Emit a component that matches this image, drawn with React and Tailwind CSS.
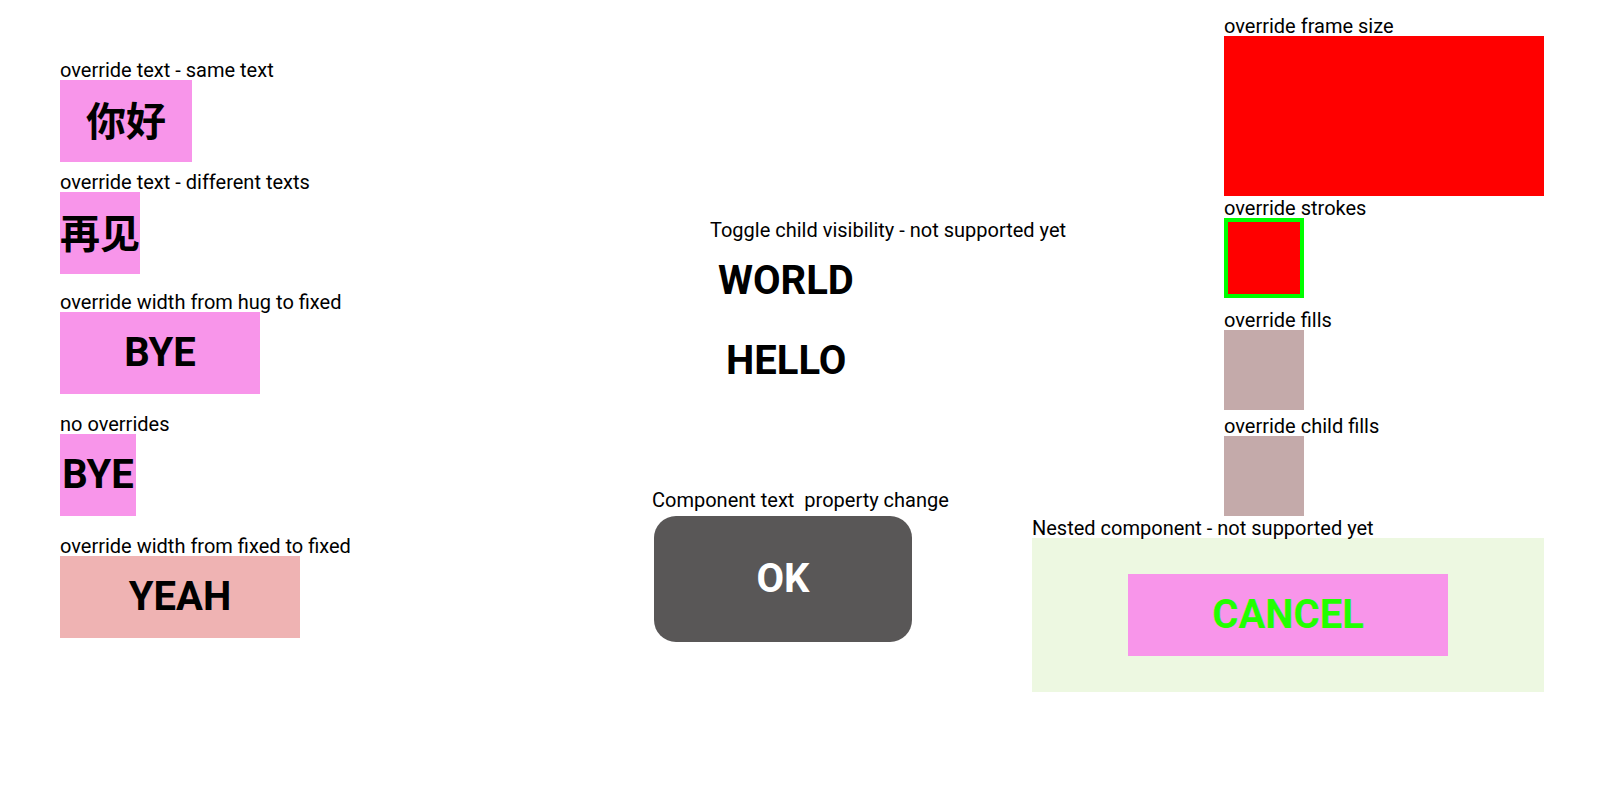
import React from 'react';

const label = 'block h-[21px] leading-[23px] text-[20px] text-black whitespace-pre';
const bold = 'font-bold text-[40px] leading-none';
const cjk = 'font-bold text-[40px] leading-none pt-[4px]';

export default function App() {
    return (
        <div
            className="relative w-[1604px] h-[796px] bg-white overflow-hidden text-black"
            style={{ fontFamily: 'Roboto, "Noto Sans CJK SC", sans-serif' }}
        >
            {/* left column */}
            <div className="absolute left-[60px] top-[59px]">
                <span className={label}>override text - same text</span>
                <div className="w-[132px] h-[82px] bg-[#f895ea] flex items-center justify-center">
                    <span className={cjk}>你好</span>
                </div>
            </div>

            <div className="absolute left-[60px] top-[171px]">
                <span className={label}>override text - different texts</span>
                <div className="w-[80px] h-[82px] bg-[#f895ea] flex items-center justify-center">
                    <span className={cjk}>再见</span>
                </div>
            </div>

            <div className="absolute left-[60px] top-[291px]">
                <span className={label}>override width from hug to fixed</span>
                <div className="w-[200px] h-[82px] bg-[#f895ea] flex items-center justify-center">
                    <span className={bold}>BYE</span>
                </div>
            </div>

            <div className="absolute left-[60px] top-[413px]">
                <span className={label}>no overrides</span>
                <div className="w-[76px] h-[82px] bg-[#f895ea] flex items-center justify-center">
                    <span className={bold}>BYE</span>
                </div>
            </div>

            <div className="absolute left-[60px] top-[535px]">
                <span className={label}>override width from fixed to fixed</span>
                <div className="w-[240px] h-[82px] bg-[#efb3b3] flex items-center justify-center">
                    <span className={bold}>YEAH</span>
                </div>
            </div>

            {/* middle column */}
            <div className="absolute left-[710px] top-[219px] flex flex-col">
                <span className={label}>Toggle child visibility - not supported yet</span>
                <div className="ml-[8px] mt-[18px] font-bold text-[40px] leading-[46px]">WORLD</div>
                <div className="ml-[16px] mt-[34px] font-bold text-[40px] leading-[46px]">HELLO</div>
            </div>

            <div className="absolute left-[652px] top-[489px]">
                <span className={label}>Component text  property change</span>
                <div className="ml-[2px] mt-[6px] w-[258px] h-[126px] rounded-[22px] bg-[#595757] flex items-center justify-center">
                    <span className="font-bold text-[40px] leading-none text-white">OK</span>
                </div>
            </div>

            {/* right column */}
            <div className="absolute left-[1224px] top-[15px]">
                <span className={label}>override frame size</span>
                <div className="w-[320px] h-[160px] bg-[#ff0000]" />
            </div>

            <div className="absolute left-[1224px] top-[197px]">
                <span className={label}>override strokes</span>
                <div className="w-[80px] h-[80px] bg-[#ff0000] border-4 border-[#00ff00]" />
            </div>

            <div className="absolute left-[1224px] top-[309px]">
                <span className={label}>override fills</span>
                <div className="w-[80px] h-[80px] bg-[#c4aaaa]" />
            </div>

            <div className="absolute left-[1224px] top-[415px]">
                <span className={label}>override child fills</span>
                <div className="w-[80px] h-[80px] bg-[#c4aaaa]" />
            </div>

            <div className="absolute left-[1032px] top-[517px]">
                <span className={label}>Nested component - not supported yet</span>
                <div className="w-[512px] h-[154px] bg-[#edf8e1] flex items-center justify-center">
                    <div className="w-[320px] h-[82px] bg-[#f895ea] flex items-center justify-center">
                        <span className="font-bold text-[40px] leading-none text-[#22ff00]">CANCEL</span>
                    </div>
                </div>
            </div>
        </div>
    );
}
